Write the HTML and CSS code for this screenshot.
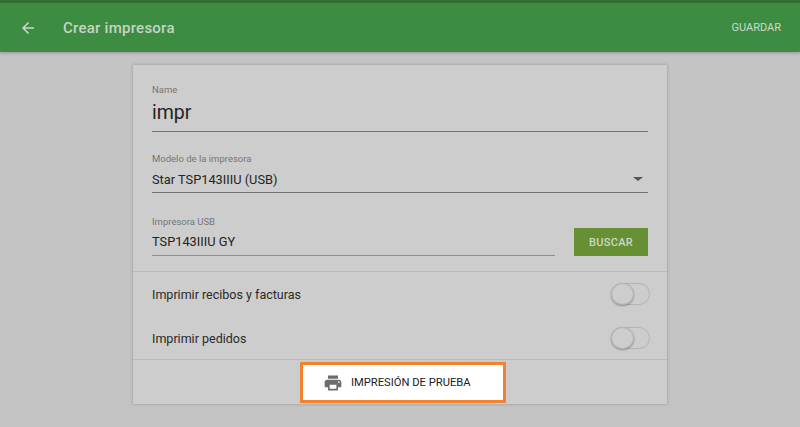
FILE: index.html
```html
<!DOCTYPE html>
<html lang="en">
<head>
    <meta charset="UTF-8">
    <meta name="viewport" content="width=device-width, initial-scale=1.0">
    <title>Crear impresora</title>
    <link rel="stylesheet" href="styles.css">
</head>
<body>

<header class="app-bar">
    <svg class="back-icon" viewBox="0 0 24 24" width="18" height="18">
        <path d="M20 11H7.8l5.6-5.6L12 4l-8 8 8 8 1.4-1.4L7.8 13H20z"/>
    </svg>
    <h1 class="app-title">Crear impresora</h1>
    <span class="save-action">GUARDAR</span>
</header>

<main class="card">
    <div class="fields">
        <div class="field field-name">
            <label class="field-label">Name</label>
            <div class="field-value name-value">impr</div>
        </div>
        <div class="field field-model">
            <label class="field-label">Modelo de la impresora</label>
            <div class="field-value select-value">
                <span>Star TSP143IIIU (USB)</span>
                <span class="select-arrow"></span>
            </div>
        </div>
        <div class="usb-row">
            <div class="field field-usb">
                <label class="field-label">Impresora USB</label>
                <div class="field-value usb-value">TSP143IIIU GY</div>
            </div>
            <button type="button" class="search-button">BUSCAR</button>
        </div>
    </div>
    <div class="toggles">
        <div class="toggle-row">
            <span>Imprimir recibos y facturas</span>
            <span class="toggle"><span class="toggle-knob"></span></span>
        </div>
        <div class="toggle-row">
            <span>Imprimir pedidos</span>
            <span class="toggle"><span class="toggle-knob"></span></span>
        </div>
    </div>
    <div class="card-footer">
        <button type="button" class="test-print">
            <svg class="print-icon" viewBox="0 0 24 24" width="20" height="20">
                <path d="M19 8H5c-1.66 0-3 1.34-3 3v6h4v4h12v-4h4v-6c0-1.66-1.34-3-3-3zm-3 11H8v-5h8v5zm3-7c-.55 0-1-.45-1-1s.45-1 1-1 1 .45 1 1-.45 1-1 1zm-1-9H6v4h12V3z"/>
            </svg>
            IMPRESIÓN DE PRUEBA
        </button>
    </div>
</main>

</body>
</html>
```

FILE: styles.css
```css
body {
    margin: 0;
    height: 427px;
    overflow: hidden;
    background-color: #c4c4c4;
    font-family: Roboto, "Liberation Sans", sans-serif;
    color: #222;
}
.app-bar {
    height: 49px;
    border-top: 3px solid #2f6f33;
    background-color: #3c8d41;
    box-shadow: 0 1px 3px rgba(0, 0, 0, 0.25);
    display: flex;
    align-items: center;
    padding: 0 19px;
}
.back-icon {
    fill: #cfd8cf;
    flex: none;
}
.app-title {
    margin: 0 0 0 26px;
    flex: 1;
    font-size: 15px;
    font-weight: 500;
    letter-spacing: 0.25px;
    color: #c6d3c6;
}
.save-action {
    font-size: 11px;
    font-weight: 400;
    color: #cdd8cd;
}
.card {
    width: 534px;
    height: 339px;
    margin: 13px auto 0;
    background-color: #cdcdcd;
    box-shadow: 0 0 3px rgba(0, 0, 0, 0.25);
    display: flex;
    flex-direction: column;
}
.fields {
    height: 207px;
    box-sizing: border-box;
    padding: 0 19px;
    border-bottom: 1px solid #bababa;
}
.field-label {
    display: block;
    font-size: 9.5px;
    line-height: 12px;
    color: #757575;
}
.field-value {
    border-bottom: 1px solid #737373;
    font-size: 12.8px;
    color: #232323;
}
.field-name {
    padding-top: 19px;
}
.name-value {
    font-size: 19.5px;
    line-height: 28px;
    height: 32px;
    margin-top: 3px;
}
.field-model {
    padding-top: 21px;
}
.select-value {
    display: flex;
    justify-content: space-between;
    align-items: center;
    height: 24px;
    margin-top: 2px;
    padding-bottom: 1px;
}
.select-arrow {
    width: 0;
    height: 0;
    margin-right: 5px;
    border-left: 5px solid transparent;
    border-right: 5px solid transparent;
    border-top: 4px solid #555;
}
.usb-row {
    display: flex;
    align-items: flex-end;
    gap: 19px;
    margin-top: 23px;
}
.field-usb {
    flex: 1;
}
.usb-value {
    height: 22px;
    line-height: 22px;
    margin-top: 3px;
    padding-bottom: 2px;
    border-bottom-color: #8c8c8c;
}
.search-button {
    width: 74px;
    height: 28px;
    padding: 0;
    border: none;
    background-color: #679035;
    color: #cfd8c4;
    font-family: inherit;
    font-size: 11px;
    font-weight: 500;
    letter-spacing: 0.3px;
}
.toggles {
    height: 87px;
    padding: 0 17px 0 19px;
    border-bottom: 1px solid #bababa;
}
.toggle-row {
    height: 44px;
    display: flex;
    justify-content: space-between;
    align-items: center;
    font-size: 12.5px;
    color: #2a2a2a;
}
.toggle {
    width: 39px;
    height: 22px;
    box-sizing: border-box;
    border: 1px solid #b4b4b4;
    border-radius: 11px;
    display: block;
    position: relative;
}
.toggle-knob {
    position: absolute;
    left: -1px;
    top: -1px;
    width: 23px;
    height: 22px;
    box-sizing: border-box;
    border-radius: 50%;
    background-color: #cdcdcd;
    border: 1px solid #b4b4b4;
    box-shadow: 0 1px 2px rgba(0, 0, 0, 0.3);
}
.card-footer {
    flex: 1;
    display: flex;
    justify-content: center;
    align-items: flex-start;
    padding-top: 2px;
}
.test-print {
    width: 206px;
    height: 41px;
    margin-right: -6px;
    box-sizing: border-box;
    border: 3px solid #f08232;
    background-color: #fff;
    display: flex;
    align-items: center;
    padding: 0 0 0 20px;
    gap: 8px;
    font-family: inherit;
    font-size: 11.2px;
    font-weight: 400;
    color: #222;
}
.print-icon {
    fill: #6d6d6d;
    flex: none;
}
```
